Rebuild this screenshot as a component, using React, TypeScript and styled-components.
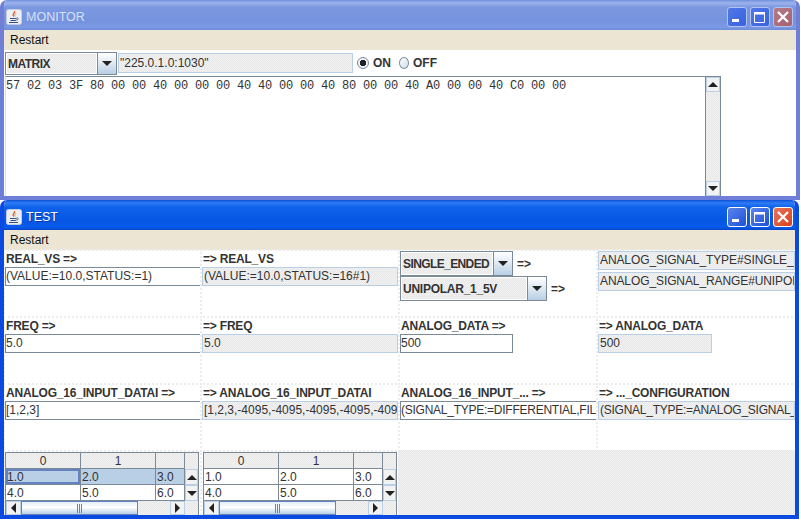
import React from "react";
import styled, { createGlobalStyle, css } from "styled-components";

const FONT = `"Liberation Sans", Arial, sans-serif`;
const BORDER = "#7a8a99";
const LIGHT = "#b8cfe5";
const TEXT = "#333333";
const dither = css`
  background-color: #eeeeee;
  background-image: repeating-conic-gradient(#e8e8e8 0% 25%, #f1f1f1 0% 50%);
  background-size: 2px 2px;
`;

const GlobalStyle = createGlobalStyle`
  html, body {
    margin: 0;
    padding: 0;
    background: #ffffff;
    overflow: hidden;
  }
  * { box-sizing: border-box; }
`;

const JavaIcon = () => (
  <svg width="16" height="16" viewBox="0 0 16 16">
    <rect x="0.5" y="0.5" width="15" height="15" rx="2" fill="#eceef2" stroke="#c4cbe0" />
    <path d="M8.5 2 C10 4 6 5 7.5 7.5 C6 5.8 8 4.4 8.5 2 Z" fill="#e2531f" stroke="#e2531f" strokeWidth="0.8" />
    <path d="M10.2 4.2 C9 5.2 8.6 6 9.2 7.5" fill="none" stroke="#ea8a3a" strokeWidth="0.9" />
    <path d="M4 9.5 H10.5 M4.5 11.5 H10 M3 13.5 H12" stroke="#34507e" strokeWidth="1" fill="none" />
    <path d="M10.5 9 C13 8.6 13 10.8 10 11.2" stroke="#34507e" strokeWidth="0.8" fill="none" />
  </svg>
);

const Window = styled.div<{ $active?: boolean; $width: number; $height: number }>`
  width: ${(p) => p.$width}px;
  height: ${(p) => p.$height}px;
  display: flex;
  flex-direction: column;
  border-radius: 7px 7px 0 0;
  border: solid ${(p) => (p.$active ? "#0a4ae0" : "#6f7fd8")};
  border-width: 0 4px 4px 4px;
  background: #ffffff;
  overflow: hidden;
`;

const TitleBar = styled.div<{ $active?: boolean }>`
  flex: 0 0 30px;
  margin: 0 -4px;
  padding: 3px ${(p) => (p.$active ? 6 : 7)}px 0 6px;
  display: flex;
  align-items: center;
  gap: 4px;
  background: ${(p) =>
    p.$active
      ? "linear-gradient(#0a50d8 0, #2f7cf5 3px, #0e62ea 7px, #0556e4 22px, #0a5cee 27px, #0746c8 30px)"
      : "linear-gradient(#6f90dc 0, #9db3ee 3px, #7b98e0 7px, #7593de 22px, #7c9ae4 27px, #6e8ad8 30px)"};
`;

const TitleText = styled.span<{ $active?: boolean }>`
  font: 12.5px ${FONT};
  color: ${(p) => (p.$active ? "#ffffff" : "#d6e0f8")};
  text-shadow: ${(p) => (p.$active ? "1px 1px 0 #0a3aa0" : "none")};
  flex: 1;
`;

const WinButtonGroup = styled.div`
  display: flex;
  gap: 3px;
`;

const WinButton = styled.div<{ $active?: boolean; $close?: boolean }>`
  width: 20px;
  height: 20px;
  border-radius: 3px;
  border: 1px solid ${(p) => (p.$active ? "#ffffff" : "#b4c4f0")};
  display: flex;
  align-items: center;
  justify-content: center;
  background: ${(p) =>
    p.$close
      ? p.$active
        ? "linear-gradient(135deg, #e8765a, #d8401c)"
        : "linear-gradient(135deg, #b57a88, #a8606f)"
      : p.$active
        ? "linear-gradient(135deg, #5d86ea, #1c50d6)"
        : "linear-gradient(135deg, #4f78e6, #3a62de)"};
`;

const WindowButtons = ({ active }: { active?: boolean }) => (
  <WinButtonGroup>
    <WinButton $active={active}>
      <svg width="14" height="14" viewBox="0 0 14 14">
        <rect x="2" y="9" width="7" height="3" fill="#ffffff" />
      </svg>
    </WinButton>
    <WinButton $active={active}>
      <svg width="14" height="14" viewBox="0 0 14 14">
        <path d="M1.5 3.5 H11.5 V12.5 H1.5 Z" fill="none" stroke="#ffffff" />
        <rect x="1" y="2" width="11" height="2.5" fill="#ffffff" />
      </svg>
    </WinButton>
    <WinButton $active={active} $close>
      <svg width="14" height="14" viewBox="0 0 14 14">
        <path d="M2 2 L12 12 M12 2 L2 12" stroke="#ffffff" strokeWidth="2.2" />
      </svg>
    </WinButton>
  </WinButtonGroup>
);

const MenuBar = styled.div`
  flex: 0 0 19px;
  background: #ece5d3;
  font: 12px ${FONT};
  color: #111111;
  padding: 1px 0 0 6px;
  line-height: 19px;
`;

const Toolbar = styled.div`
  flex: 0 0 26px;
  padding: 2px 0 0 1px;
  display: flex;
  align-items: flex-start;
`;

const ComboBox = styled.div<{ $width: number; $height: number }>`
  width: ${(p) => p.$width}px;
  height: ${(p) => p.$height}px;
  flex: none;
  display: flex;
  border: 1px solid ${BORDER};
`;

const ComboText = styled.div<{ $spacing: number }>`
  flex: 1;
  min-width: 0;
  ${dither}
  border: 1px solid #ffffff;
  font: bold 12px ${FONT};
  letter-spacing: ${(p) => p.$spacing}px;
  color: ${TEXT};
  padding-left: 1px;
  display: flex;
  align-items: center;
  white-space: nowrap;
`;

const ComboArrow = styled.div`
  flex: 0 0 19px;
  border-left: 1px solid ${BORDER};
  background: linear-gradient(#ffffff, #dde8f3 50%, #b8cfe5);
  display: flex;
  align-items: center;
  justify-content: center;
`;

const Triangle = styled.span<{ $dir: "up" | "down" | "left" | "right" }>`
  width: 0;
  height: 0;
  display: block;
  ${(p) =>
    p.$dir === "up" || p.$dir === "down"
      ? css`
          border-left: 5px solid transparent;
          border-right: 5px solid transparent;
          ${p.$dir === "up" ? "border-bottom" : "border-top"}: 5px solid #222222;
        `
      : css`
          border-top: 5px solid transparent;
          border-bottom: 5px solid transparent;
          ${p.$dir === "left" ? "border-right" : "border-left"}: 5px solid #222222;
        `}
`;

const Combo = ({
  value,
  width,
  height,
  spacing,
}: {
  value: string;
  width: number;
  height: number;
  spacing: number;
}) => (
  <ComboBox $width={width} $height={height}>
    <ComboText $spacing={spacing}>{value}</ComboText>
    <ComboArrow>
      <Triangle $dir="down" />
    </ComboArrow>
  </ComboBox>
);

const AddressField = styled.div`
  width: 235px;
  height: 20px;
  margin: 1px 0 0 1px;
  ${dither}
  border: 1px solid ${LIGHT};
  font: 12px ${FONT};
  color: ${TEXT};
  line-height: 19px;
  padding-left: 1px;
`;

const RadioLabel = styled.div`
  display: flex;
  align-items: center;
  height: 22px;
  margin-left: 4px;
  gap: 4px;
  font: bold 12px ${FONT};
  color: ${TEXT};
  width: 38px;
`;

const RadioDot = styled.span<{ $checked?: boolean }>`
  width: 12px;
  height: 12px;
  border-radius: 50%;
  border: 1px solid ${BORDER};
  background: ${(p) =>
    p.$checked ? "radial-gradient(circle, #222 0 3px, #eef3f8 3.5px)" : "linear-gradient(135deg, #ffffff, #cfdeee)"};
`;

const TextAreaRow = styled.div`
  flex: 1;
  display: flex;
  padding-left: 1px;
  min-height: 0;
`;

const HexArea = styled.div`
  width: 700px;
  border-top: 1px solid ${BORDER};
  border-left: 1px solid #d8dfe6;
  font: 12px "Liberation Mono", monospace;
  letter-spacing: -0.2px;
  color: ${TEXT};
  padding: 2px 0 0 0;
  white-space: pre;
  overflow: hidden;
`;

const VerticalBar = styled.div`
  width: 16px;
  display: flex;
  flex-direction: column;
  border: 1px solid ${BORDER};
  border-width: 1px 1px 0 1px;
  ${dither}
`;

const ArrowButton = styled.div<{ $size?: number }>`
  flex: 0 0 ${(p) => p.$size ?? 15}px;
  background: #f2f2f2;
  border: 1px solid ${LIGHT};
  display: flex;
  align-items: center;
  justify-content: center;
`;

const Track = styled.div`
  flex: 1;
`;

const CellGrid = styled.div`
  flex: 1;
  display: grid;
  grid-template-columns: 195px 196px 196px 197px;
  grid-template-rows: 65px 65px 65px 65px;
  column-gap: 2px;
  row-gap: 2px;
  padding: 1px 0 0 1px;
  background: #ffffff;
`;

const Cell = styled.div`
  background: #ffffff;
  display: flex;
  flex-direction: column;
  outline: 2px dotted #ececec;
`;

const GrayFill = styled.div`
  grid-column: span 2;
  margin: -2px -2px -6px;
  ${dither}
`;

const Label = styled.div`
  height: 16px;
  font: bold 12px ${FONT};
  letter-spacing: -0.2px;
  color: ${TEXT};
  padding-left: 1px;
  line-height: 16px;
  white-space: nowrap;
`;

const Field = styled.div<{ $disabled?: boolean; $width?: number; $spacing?: number }>`
  width: ${(p) => (p.$width ? `${p.$width}px` : "100%")};
  height: 19px;
  flex: none;
  font: 12px ${FONT};
  letter-spacing: ${(p) => p.$spacing ?? 0}px;
  color: ${TEXT};
  line-height: 17px;
  white-space: nowrap;
  overflow: hidden;
  ${(p) =>
    p.$disabled
      ? css`
          ${dither}
          border: 1px solid ${LIGHT};
          padding-left: 1px;
        `
      : css`
          background: #ffffff;
          border: 1px solid ${BORDER};
          border-width: ${p.$width ? "1px" : "1px 0 1px 1px"};
        `}
`;

const ComboRow = styled.div`
  display: flex;
  align-items: center;
  gap: 4px;
  height: 25px;
  font: bold 12px ${FONT};
  color: ${TEXT};
`;

const StackedFields = styled.div`
  display: flex;
  flex-direction: column;
  gap: 2px;
`;

const TableBox = styled.div<{ $inset?: number }>`
  width: 194px;
  height: 64px;
  margin-left: ${(p) => p.$inset ?? 0}px;
  border: 1px solid ${BORDER};
  display: flex;
  flex-direction: column;
  ${dither}
`;

const HeaderRow = styled.div`
  height: 16px;
  flex: none;
  display: flex;
`;

const HeaderCell = styled.div<{ $width: number }>`
  width: ${(p) => p.$width}px;
  flex: none;
  border-right: 1px solid ${BORDER};
  border-bottom: 1px solid ${BORDER};
  font: 12px ${FONT};
  color: ${TEXT};
  text-align: center;
  line-height: 16px;
`;

const TableBody = styled.div`
  display: flex;
  height: 32px;
  flex: none;
`;

const Rows = styled.div`
  width: 179px;
  flex: none;
`;

const Row = styled.div<{ $selected?: boolean }>`
  height: 16px;
  display: flex;
  background: ${(p) => (p.$selected ? LIGHT : "#ffffff")};
`;

const DataCell = styled.div<{ $width: number; $focused?: boolean }>`
  width: ${(p) => p.$width}px;
  flex: none;
  border-right: 1px solid ${BORDER};
  border-bottom: 1px solid ${BORDER};
  font: 12px ${FONT};
  color: ${TEXT};
  line-height: 16px;
  padding-left: 1px;
  ${(p) => p.$focused && `box-shadow: inset 0 0 0 2px #6382bf;`}
`;

const SideButtons = styled.div`
  flex: 1;
  display: flex;
  flex-direction: column;
`;

const HBarRow = styled.div`
  height: 15px;
  display: flex;
`;

const HBar = styled.div`
  width: 179px;
  display: flex;
`;

const Thumb = styled.div`
  flex: 0 0 117px;
  border: 1px solid #6382bf;
  background: linear-gradient(#e4edf6, #ffffff 45%, #b8cfe5);
  display: flex;
  align-items: center;
  justify-content: center;
`;

const DataTable = ({ selected, inset }: { selected?: boolean; inset?: number }) => (
  <TableBox $inset={inset}>
    <HeaderRow>
      <HeaderCell $width={75}>0</HeaderCell>
      <HeaderCell $width={75}>1</HeaderCell>
      <HeaderCell $width={29} />
    </HeaderRow>
    <TableBody>
      <Rows>
        <Row $selected={selected}>
          <DataCell $width={75} $focused={selected}>1.0</DataCell>
          <DataCell $width={75}>2.0</DataCell>
          <DataCell $width={29}>3.0</DataCell>
        </Row>
        <Row>
          <DataCell $width={75}>4.0</DataCell>
          <DataCell $width={75}>5.0</DataCell>
          <DataCell $width={29}>6.0</DataCell>
        </Row>
      </Rows>
      <SideButtons>
        <ArrowButton $size={16}>
          <Triangle $dir="up" />
        </ArrowButton>
        <ArrowButton $size={16}>
          <Triangle $dir="down" />
        </ArrowButton>
      </SideButtons>
    </TableBody>
    <HBarRow>
      <HBar>
        <ArrowButton>
          <Triangle $dir="left" />
        </ArrowButton>
        <Thumb>
          <svg width="7" height="9" viewBox="0 0 7 9">
            <path d="M1.5 0 V9 M3.5 0 V9 M5.5 0 V9" stroke="#6382bf" />
          </svg>
        </Thumb>
        <Track />
        <ArrowButton>
          <Triangle $dir="right" />
        </ArrowButton>
      </HBar>
    </HBarRow>
  </TableBox>
);

export default function App() {
  return (
    <>
      <GlobalStyle />
      <Window $width={800} $height={200}>
        <TitleBar>
          <JavaIcon />
          <TitleText>MONITOR</TitleText>
          <WindowButtons />
        </TitleBar>
        <MenuBar>Restart</MenuBar>
        <Toolbar>
          <Combo value="MATRIX" width={112} height={23} spacing={-0.5} />
          <AddressField>"225.0.1.0:1030"</AddressField>
          <RadioLabel>
            <RadioDot $checked />
            ON
          </RadioLabel>
          <RadioLabel>
            <RadioDot />
            OFF
          </RadioLabel>
        </Toolbar>
        <TextAreaRow>
          <HexArea>57 02 03 3F 80 00 00 40 00 00 00 40 40 00 00 40 80 00 00 40 A0 00 00 40 C0 00 00</HexArea>
          <VerticalBar>
            <ArrowButton>
              <Triangle $dir="up" />
            </ArrowButton>
            <Track />
            <ArrowButton>
              <Triangle $dir="down" />
            </ArrowButton>
          </VerticalBar>
        </TextAreaRow>
      </Window>
      <Window $active $width={799} $height={319}>
        <TitleBar $active>
          <JavaIcon />
          <TitleText $active>TEST</TitleText>
          <WindowButtons active />
        </TitleBar>
        <MenuBar>Restart</MenuBar>
        <CellGrid>
          <Cell>
            <Label>REAL_VS =&gt;</Label>
            <Field>(VALUE:=10.0,STATUS:=1)</Field>
          </Cell>
          <Cell>
            <Label>=&gt; REAL_VS</Label>
            <Field $disabled>(VALUE:=10.0,STATUS:=16#1)</Field>
          </Cell>
          <Cell>
            <ComboRow>
              <Combo value="SINGLE_ENDED" width={113} height={25} spacing={-0.6} />
              =&gt;
            </ComboRow>
            <ComboRow>
              <Combo value="UNIPOLAR_1_5V" width={147} height={25} spacing={-0.25} />
              =&gt;
            </ComboRow>
          </Cell>
          <Cell>
            <StackedFields>
              <Field $disabled $spacing={-0.1}>ANALOG_SIGNAL_TYPE#SINGLE_</Field>
              <Field $disabled $spacing={-0.1}>ANALOG_SIGNAL_RANGE#UNIPOL</Field>
            </StackedFields>
          </Cell>

          <Cell>
            <Label>FREQ =&gt;</Label>
            <Field>5.0</Field>
          </Cell>
          <Cell>
            <Label>=&gt; FREQ</Label>
            <Field $disabled>5.0</Field>
          </Cell>
          <Cell>
            <Label>ANALOG_DATA =&gt;</Label>
            <Field $width={113}>500</Field>
          </Cell>
          <Cell>
            <Label>=&gt; ANALOG_DATA</Label>
            <Field $disabled $width={114}>500</Field>
          </Cell>

          <Cell>
            <Label>ANALOG_16_INPUT_DATAI =&gt;</Label>
            <Field>[1,2,3]</Field>
          </Cell>
          <Cell>
            <Label>=&gt; ANALOG_16_INPUT_DATAI</Label>
            <Field $disabled>[1,2,3,-4095,-4095,-4095,-4095,-409</Field>
          </Cell>
          <Cell>
            <Label>ANALOG_16_INPUT_... =&gt;</Label>
            <Field $spacing={-0.25}>(SIGNAL_TYPE:=DIFFERENTIAL,FIL</Field>
          </Cell>
          <Cell>
            <Label>=&gt; ..._CONFIGURATION</Label>
            <Field $disabled $spacing={-0.25}>(SIGNAL_TYPE:=ANALOG_SIGNAL_</Field>
          </Cell>

          <Cell>
            <DataTable selected />
          </Cell>
          <Cell>
            <DataTable inset={1} />
          </Cell>
          <GrayFill />
        </CellGrid>
      </Window>
    </>
  );
}
